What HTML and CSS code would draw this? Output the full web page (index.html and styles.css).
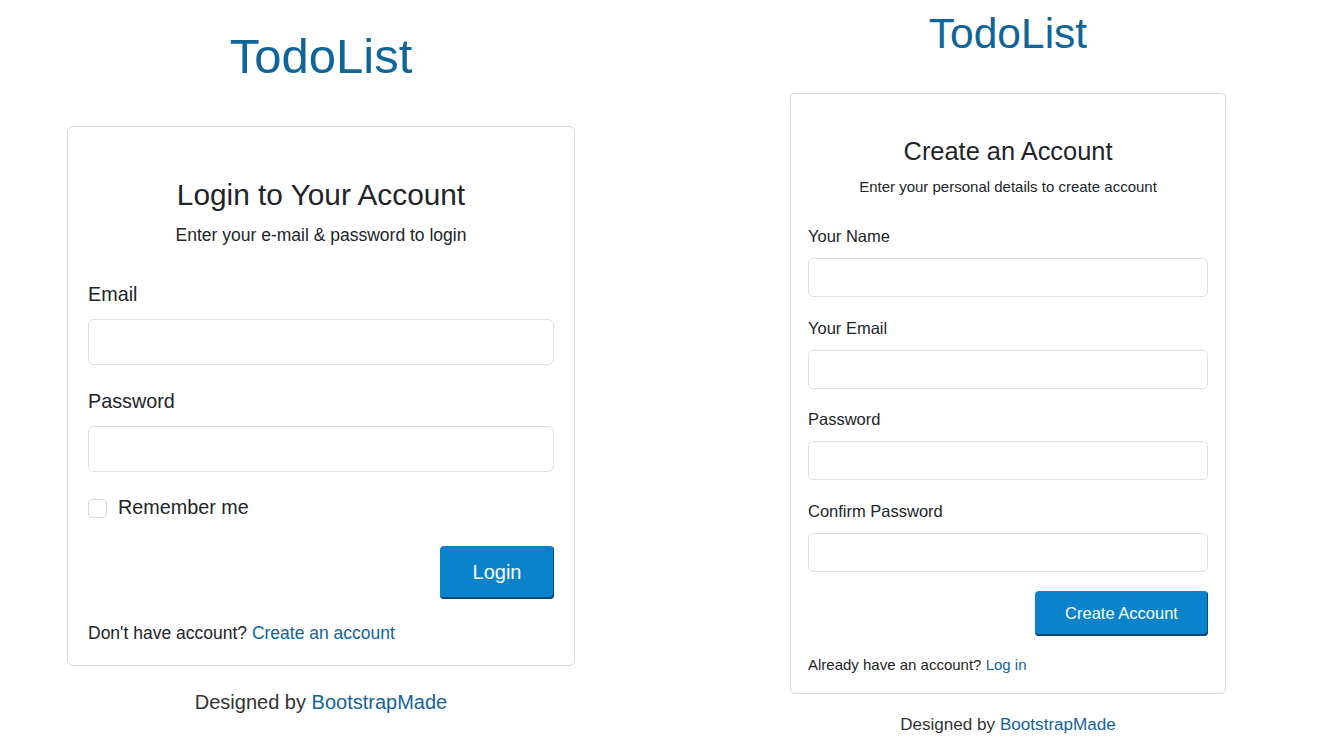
FILE: index.html
```html
<!DOCTYPE html>
<html lang="en">
<head>
<meta charset="utf-8">
<title>TodoList</title>
<link rel="stylesheet" href="styles.css">
</head>
<body>
<div class="screens">
  <section class="pane pane-login">
    <h1 class="brand">TodoList</h1>
    <div class="card">
      <h2 class="card-title">Login to Your Account</h2>
      <p class="card-sub">Enter your e-mail &amp; password to login</p>
      <div class="field">
        <label class="field-label" for="email">Email</label>
        <input class="field-input" id="email" type="email">
      </div>
      <div class="field">
        <label class="field-label" for="pass">Password</label>
        <input class="field-input" id="pass" type="password">
      </div>
      <div class="check-row">
        <input class="check" type="checkbox" id="remember">
        <label for="remember">Remember me</label>
      </div>
      <div class="actions">
        <button class="btn" type="button">Login</button>
      </div>
      <p class="alt">Don't have account? <a href="#">Create an account</a></p>
    </div>
    <p class="credits">Designed by <a href="#">BootstrapMade</a></p>
  </section>

  <section class="pane pane-register">
    <h1 class="brand">TodoList</h1>
    <div class="card">
      <h2 class="card-title">Create an Account</h2>
      <p class="card-sub">Enter your personal details to create account</p>
      <div class="field">
        <label class="field-label" for="name">Your Name</label>
        <input class="field-input" id="name" type="text">
      </div>
      <div class="field">
        <label class="field-label" for="remail">Your Email</label>
        <input class="field-input" id="remail" type="email">
      </div>
      <div class="field">
        <label class="field-label" for="rpass">Password</label>
        <input class="field-input" id="rpass" type="password">
      </div>
      <div class="field">
        <label class="field-label" for="rpass2">Confirm Password</label>
        <input class="field-input" id="rpass2" type="password">
      </div>
      <div class="actions">
        <button class="btn" type="button">Create Account</button>
      </div>
      <p class="alt">Already have an account? <a href="#">Log in</a></p>
    </div>
    <p class="credits">Designed by <a href="#">BootstrapMade</a></p>
  </section>
</div>
</body>
</html>
```

FILE: styles.css
```css
* { box-sizing: border-box; }

html, body {
  margin: 0;
  padding: 0;
  background: #ffffff;
}

body {
  font-family: "Liberation Sans", Arial, sans-serif;
  color: #212529;
  line-height: 1.2;
}

a {
  color: #12649a;
  text-decoration: none;
}

.screens {
  display: flex;
  align-items: flex-start;
  width: 1336px;
  height: 737px;
  overflow: hidden;
}

.pane {
  display: flex;
  flex-direction: column;
  align-items: center;
}

.brand {
  margin: 0;
  font-weight: 400;
  color: #0f6598;
  line-height: 1.2;
}

.card {
  background: #fff;
  border: 1px solid #d9d9d9;
  display: flex;
  flex-direction: column;
}

.card-title {
  margin: 0;
  font-weight: 400;
  text-align: center;
  line-height: 1.2;
}

.card-sub {
  margin: 0;
  text-align: center;
}

.field {
  display: flex;
  flex-direction: column;
}

.field-label {
  display: block;
}

.field-input {
  display: block;
  width: 100%;
  border: 1px solid #dcdfe4;
  background: #fff;
  margin: 0;
  font: inherit;
}

.actions {
  display: flex;
  justify-content: flex-end;
}

.btn {
  font-family: "Liberation Sans", Arial, sans-serif;
  background: #0a83cc;
  color: #fff;
  border: 0;
  border-radius: 4px;
  box-shadow: inset -1px -2px 0 #0b4a74;
  display: flex;
  align-items: center;
  justify-content: center;
  padding: 0;
  cursor: pointer;
}

.alt { margin: 0; }

.credits {
  margin: 0;
  color: #333;
  text-align: center;
}

/* ---------- login pane (larger) ---------- */
.pane-login {
  width: 642px;
}

.pane-login .brand {
  font-size: 49px;
  margin-top: 27px;
}

.pane-login .card {
  width: 508px;
  margin-top: 40.2px;
  border-radius: 6px;
  padding: 50px 20px 21px;
}

.pane-login .card-title {
  font-size: 29.8px;
}

.pane-login .card-sub {
  font-size: 17.5px;
  margin-top: 12.7px;
}

.pane-login .field {
  margin-top: 24.3px;
}

.pane-login .field:first-of-type {
  margin-top: 36.6px;
}

.pane-login .field-label {
  font-size: 19.8px;
  margin-bottom: 12.6px;
}

.pane-login .field-input {
  height: 46px;
  border-radius: 6px;
}

.check-row {
  display: flex;
  align-items: center;
  gap: 11px;
  margin-top: 24.3px;
  font-size: 19.8px;
}

.check {
  appearance: none;
  -webkit-appearance: none;
  width: 19px;
  height: 19px;
  margin: 0;
  border: 1px solid #d4d8de;
  border-radius: 4px;
  background: #fff;
}

.pane-login .actions {
  margin-top: 26px;
}

.pane-login .btn {
  width: 114px;
  height: 53px;
  font-size: 20px;
}

.pane-login .alt {
  font-size: 17.5px;
  margin-top: 24.4px;
}

.pane-login .credits {
  font-size: 20px;
  margin-top: 23.5px;
}

/* ---------- register pane (smaller) ---------- */
.pane-register {
  width: 656px;
  margin-left: 38px;
}

.pane-register .brand {
  font-size: 42.5px;
  margin-top: 8px;
}

.pane-register .card {
  width: 436px;
  margin-top: 34px;
  border-radius: 5px;
  padding: 42px 17px 19px;
}

.pane-register .card-title {
  font-size: 25.4px;
}

.pane-register .card-sub {
  font-size: 15px;
  margin-top: 11.3px;
}

.pane-register .field {
  margin-top: 21.6px;
}

.pane-register .field:first-of-type {
  margin-top: 31.2px;
}

.pane-register .field-label {
  font-size: 16.5px;
  margin-bottom: 11.3px;
}

.pane-register .field-input {
  height: 39px;
  border-radius: 5px;
}

.pane-register .actions {
  margin-top: 19px;
}

.pane-register .btn {
  width: 173px;
  height: 45px;
  font-size: 16.5px;
}

.pane-register .alt {
  font-size: 15px;
  margin-top: 19.8px;
}

.pane-register .credits {
  font-size: 17.1px;
  margin-top: 21.5px;
}
```
